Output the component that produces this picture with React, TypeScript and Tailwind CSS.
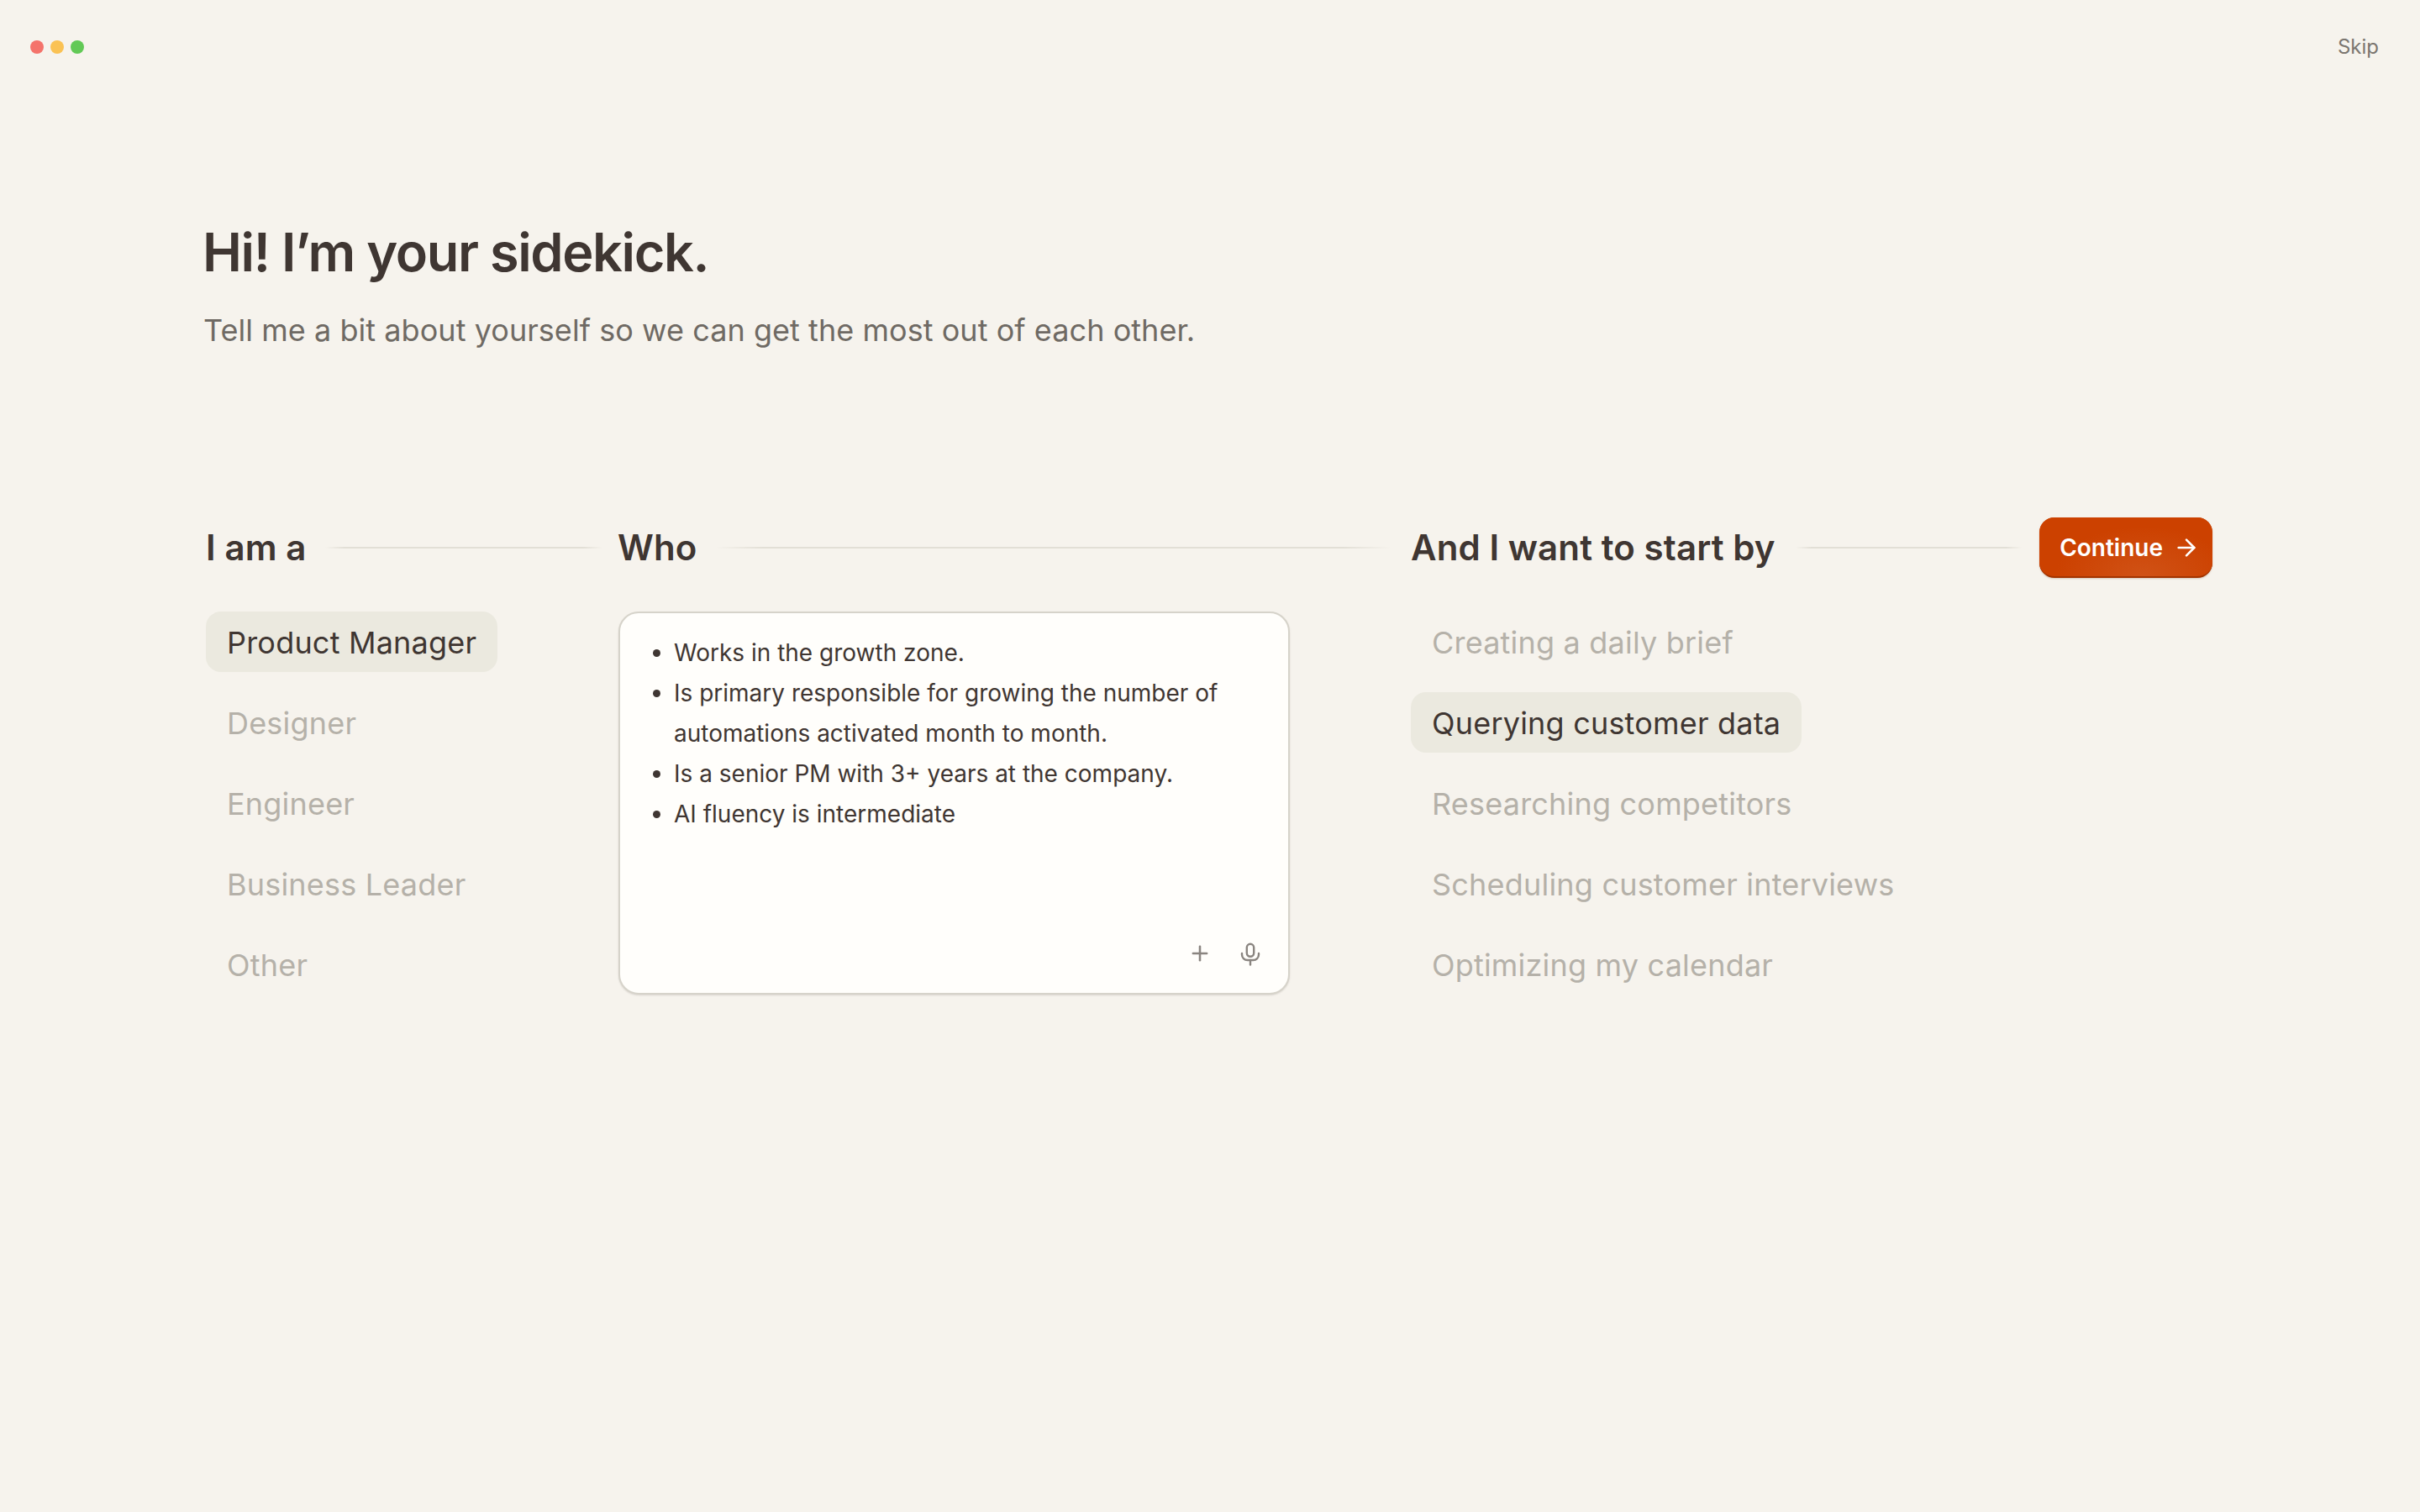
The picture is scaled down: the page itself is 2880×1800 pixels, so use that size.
import React from 'react'
import { Plus, ArrowRight } from 'lucide-react'

const roles = ['Product Manager', 'Designer', 'Engineer', 'Business Leader', 'Other']
const goals = [
  'Creating a daily brief',
  'Querying customer data',
  'Researching competitors',
  'Scheduling customer interviews',
  'Optimizing my calendar',
]

function ColumnHead({ title }: { title: string }) {
  return (
    <h2 className="text-[42px] leading-[72px] font-semibold tracking-[0.1px] text-[#3f3632] whitespace-nowrap">
      {title}
    </h2>
  )
}

function Rule() {
  return <div className="h-[2px] flex-1 bg-[linear-gradient(90deg,transparent,#e2dfd6_7%,#e2dfd6_93%,transparent)]" />
}

function Options({ items, active }: { items: string[]; active: string }) {
  return (
    <ul className="flex flex-col items-start gap-6">
      {items.map((item) => (
        <li
          key={item}
          className={
            item === active
              ? 'h-[72px] px-[25px] rounded-[18px] bg-[#ebe9df] text-[36px] leading-[74px] tracking-[0.2px] text-[#3f3632]'
              : 'h-[72px] px-[25px] text-[36px] leading-[74px] tracking-[0.2px] text-[#b5b1a9]'
          }
        >
          {item}
        </li>
      ))}
    </ul>
  )
}

function MicIcon() {
  return (
    <svg width="24" height="30" viewBox="0 0 24 30" fill="none" stroke="#8a8580" strokeWidth="2.4" strokeLinecap="round">
      <rect x="7.8" y="3.8" width="8.4" height="15" rx="4.2" />
      <path d="M2 15v1.5a6.5 6.5 0 0 0 6.5 6.5h7a6.5 6.5 0 0 0 6.5-6.5V15" />
      <path d="M12 23v5.5" />
    </svg>
  )
}

export default function App() {
  return (
    <div className="min-h-screen bg-[#f6f3ed] pt-[44px] font-[Inter,sans-serif]">
      <header className="flex h-[24px] items-center justify-between pl-[36px] pr-[49px]">
        <div className="flex gap-2">
          <span className="h-4 w-4 rounded-full bg-[#f4736b]" />
          <span className="h-4 w-4 rounded-full bg-[#fac254]" />
          <span className="h-4 w-4 rounded-full bg-[#62c956]" />
        </div>
        <button className="text-[24px] leading-[24px] text-[#7b7670]">Skip</button>
      </header>

      <main className="pl-[241px] pt-[192px]">
        <h1 className="text-[63px] leading-[80px] font-semibold tracking-[-1.4px] text-[#3f3632]">
          Hi! I’m your sidekick.
        </h1>
        <p className="mt-[29px] ml-[1px] text-[36px] leading-[48px] tracking-[0.05px] text-[#6f6a64]">
          Tell me a bit about yourself so we can get the most out of each other.
        </p>

        <div className="mt-[199px] ml-[4px] grid grid-cols-[490px_944px_954px]">
          <section>
            <div className="flex items-center gap-[23px] pr-[18px]">
              <ColumnHead title="I am a" />
              <Rule />
            </div>
            <div className="mt-10">
              <Options items={roles} active="Product Manager" />
            </div>
          </section>

          <section>
            <div className="flex items-center gap-[23px] pr-[24px]">
              <ColumnHead title="Who" />
              <Rule />
            </div>
            <div className="mt-10 ml-[1px] flex h-[456px] w-[799px] flex-col justify-between rounded-[24px] border-2 border-[#d6d3ca] bg-[#fffefb] pt-[23px] pb-[32px] pr-[33px] shadow-[0_1px_2px_rgba(60,50,40,0.15)]">
              <ul className="list-disc pl-[64px] text-[28px] leading-[48px] text-[#3f3632]">
                <li>Works in the growth zone.</li>
                <li>Is primary responsible for growing the number of automations activated month to month.</li>
                <li>Is a senior PM with 3+ years at the company.</li>
                <li>AI fluency is intermediate</li>
              </ul>
              <div className="flex items-center justify-end gap-[34px]">
                <Plus size={28} strokeWidth={2.2} color="#8a8580" />
                <MicIcon />
              </div>
            </div>
          </section>

          <section>
            <div className="flex items-center">
              <ColumnHead title="And I want to start by" />
              <div className="ml-[24px] mr-[21px] flex flex-1">
                <Rule />
              </div>
              <button className="flex h-[72px] items-center gap-[12px] rounded-[18px] border-b-2 border-[#a33400] bg-[#cc4100] bg-[radial-gradient(ellipse_at_60%_100%,#d05216,#cc4100_60%)] pl-6 pr-[15px] pt-[1px] text-[28px] font-semibold text-white shadow-[0_1px_2px_rgba(120,50,10,0.25)]">
                Continue
                <ArrowRight size={32} strokeWidth={1.9} color="#ffffff" />
              </button>
            </div>
            <div className="mt-10">
              <Options items={goals} active="Querying customer data" />
            </div>
          </section>
        </div>
      </main>
    </div>
  )
}
